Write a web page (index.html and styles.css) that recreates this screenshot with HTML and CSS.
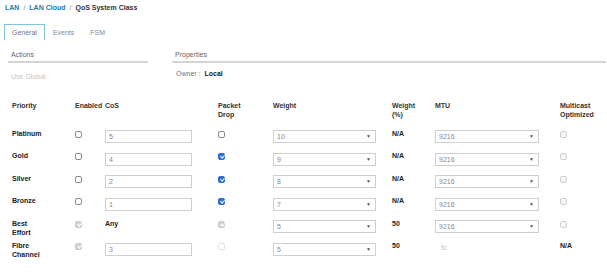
FILE: index.html
```html
<!DOCTYPE html>
<html lang="en">
<head>
    <meta charset="UTF-8">
    <title>QoS System Class</title>
    <link rel="stylesheet" href="styles.css">
</head>
<body>
    <div class="crumbs">
        <a href="#">LAN</a><span class="sep">/</span><a href="#">LAN Cloud</a><span class="sep">/</span><span class="current">QoS System Class</span>
    </div>

    <div class="tabs">
        <div class="tab active">General</div>
        <div class="tab">Events</div>
        <div class="tab">FSM</div>
    </div>

    <div class="panels">
        <div class="panel actions">
            <div class="panel-title">Actions</div>
            <div class="panel-body muted">Use Global</div>
        </div>
        <div class="panel properties">
            <div class="panel-title">Properties</div>
            <div class="panel-body owner"><span class="label">Owner :</span> <b>Local</b></div>
        </div>
    </div>

    <div class="qos">
        <div class="row head">
            <div>Priority</div>
            <div>Enabled</div>
            <div>CoS</div>
            <div>Packet<br>Drop</div>
            <div>Weight</div>
            <div>Weight<br>(%)</div>
            <div>MTU</div>
            <div>Multicast<br>Optimized</div>
        </div>

        <div class="row">
            <div class="name">Platinum</div>
            <div><input type="checkbox" class="cb"></div>
            <div><input class="field" value="5"></div>
            <div><input type="checkbox" class="cb"></div>
            <div><div class="select">10<span class="arrow">▼</span></div></div>
            <div class="val">N/A</div>
            <div><div class="select">9216<span class="arrow">▼</span></div></div>
            <div><input type="checkbox" class="cb" disabled></div>
        </div>

        <div class="row">
            <div class="name">Gold</div>
            <div><input type="checkbox" class="cb"></div>
            <div><input class="field" value="4"></div>
            <div><input type="checkbox" class="cb" checked></div>
            <div><div class="select">9<span class="arrow">▼</span></div></div>
            <div class="val">N/A</div>
            <div><div class="select">9216<span class="arrow">▼</span></div></div>
            <div><input type="checkbox" class="cb" disabled></div>
        </div>

        <div class="row">
            <div class="name">Silver</div>
            <div><input type="checkbox" class="cb"></div>
            <div><input class="field" value="2"></div>
            <div><input type="checkbox" class="cb" checked></div>
            <div><div class="select">8<span class="arrow">▼</span></div></div>
            <div class="val">N/A</div>
            <div><div class="select">9216<span class="arrow">▼</span></div></div>
            <div><input type="checkbox" class="cb" disabled></div>
        </div>

        <div class="row">
            <div class="name">Bronze</div>
            <div><input type="checkbox" class="cb"></div>
            <div><input class="field" value="1"></div>
            <div><input type="checkbox" class="cb" checked></div>
            <div><div class="select">7<span class="arrow">▼</span></div></div>
            <div class="val">N/A</div>
            <div><div class="select">9216<span class="arrow">▼</span></div></div>
            <div><input type="checkbox" class="cb" disabled></div>
        </div>

        <div class="row">
            <div class="name">Best<br>Effort</div>
            <div><input type="checkbox" class="cb" checked disabled></div>
            <div class="val">Any</div>
            <div><input type="checkbox" class="cb" checked disabled></div>
            <div><div class="select">5<span class="arrow">▼</span></div></div>
            <div class="val">50</div>
            <div><div class="select">9216<span class="arrow">▼</span></div></div>
            <div><input type="checkbox" class="cb" disabled></div>
        </div>

        <div class="row">
            <div class="name">Fibre<br>Channel</div>
            <div><input type="checkbox" class="cb" checked disabled></div>
            <div><input class="field" value="3"></div>
            <div><input type="checkbox" class="cb faint" disabled></div>
            <div><div class="select">5<span class="arrow">▼</span></div></div>
            <div class="val">50</div>
            <div class="plain">fc</div>
            <div class="val">N/A</div>
        </div>
    </div>
</body>
</html>
```

FILE: styles.css
```css
body {
    margin: 0;
    font-family: "Liberation Sans", Arial, sans-serif;
    font-size: 7px;
    line-height: 9px;
    color: #333;
    background: #fff;
}
.crumbs {
    padding: 3px 0 0 5px;
    font-weight: bold;
}
.crumbs a {
    color: #1f78a4;
    text-decoration: none;
}
.crumbs .sep {
    color: #888;
    font-weight: normal;
    margin: 0 4px;
}
.crumbs .current {
    color: #333;
}
.tabs {
    display: flex;
    margin: 12px 0 0 4px;
}
.tab {
    height: 16px;
    box-sizing: border-box;
    padding: 0 7px;
    line-height: 15px;
    border: 1px solid transparent;
    border-bottom: none;
    color: #888;
}
.tab.active {
    border-color: #7fc3de;
    color: #777;
}
.panels {
    display: flex;
    margin-top: 10px;
}
.panel-title {
    line-height: 10px;
    padding: 0 0 1px 3px;
    border-bottom: 2px solid #d4d4d4;
    color: #666;
}
.actions {
    width: 140px;
    margin-left: 8px;
}
.actions .panel-body {
    margin-top: 9px;
    padding-left: 3px;
}
.properties {
    flex: 1;
    margin: 0 1px 0 24px;
}
.properties .panel-body {
    margin-top: 6px;
    padding-left: 4px;
}
.muted {
    color: #c4c4c4;
}
.owner .label {
    color: #777;
}
.owner b {
    color: #222;
    margin-left: 2px;
}
.qos {
    margin-top: 20px;
    padding-left: 12px;
}
.row {
    display: grid;
    grid-template-columns: 63px 30px 113px 55px 119px 43px 125px 1fr;
    height: 22.5px;
    align-items: start;
}
.row.head {
    height: 27.5px;
    font-weight: bold;
    color: #333;
}
.name,
.val {
    font-weight: bold;
    color: #222;
}
.plain {
    color: #bbb;
    padding: 2px 0 0 6px;
}
.cb {
    appearance: none;
    -webkit-appearance: none;
    display: block;
    width: 7px;
    height: 7px;
    margin: 2px 0 0 0;
    box-sizing: border-box;
    border: 1px solid #8a8a8a;
    border-radius: 2px;
    background: #fff;
    position: relative;
}
.cb:checked {
    background: #2a6dd4;
    border-color: #2a6dd4;
}
.cb:checked::after {
    content: "";
    position: absolute;
    left: 1.6px;
    top: 0.2px;
    width: 1.6px;
    height: 3.2px;
    border: solid #fff;
    border-width: 0 1.3px 1.3px 0;
    transform: rotate(45deg);
}
.cb:disabled {
    border-color: #d0d0d0;
    background: #f6f6f6;
}
.cb:checked:disabled {
    background: #d2d2d2;
    border-color: #cacaca;
}
.cb.faint {
    border-color: #e2e2e2;
    background: #fff;
}
.field {
    display: block;
    width: 87px;
    height: 13px;
    margin: 1.5px 0 0 0;
    box-sizing: border-box;
    padding: 0 3px;
    border: 1px solid #cfcfcf;
    font-family: inherit;
    font-size: 7px;
    color: #888;
    background: #fff;
}
.select {
    display: flex;
    justify-content: space-between;
    align-items: center;
    width: 103px;
    height: 13px;
    margin-top: 1.5px;
    box-sizing: border-box;
    padding: 0 4px 0 3px;
    border: 1px solid #cfcfcf;
    color: #888;
}
.select .arrow {
    font-size: 5px;
    color: #555;
}
.row > div:nth-child(7) .select {
    width: 104px;
}
```
